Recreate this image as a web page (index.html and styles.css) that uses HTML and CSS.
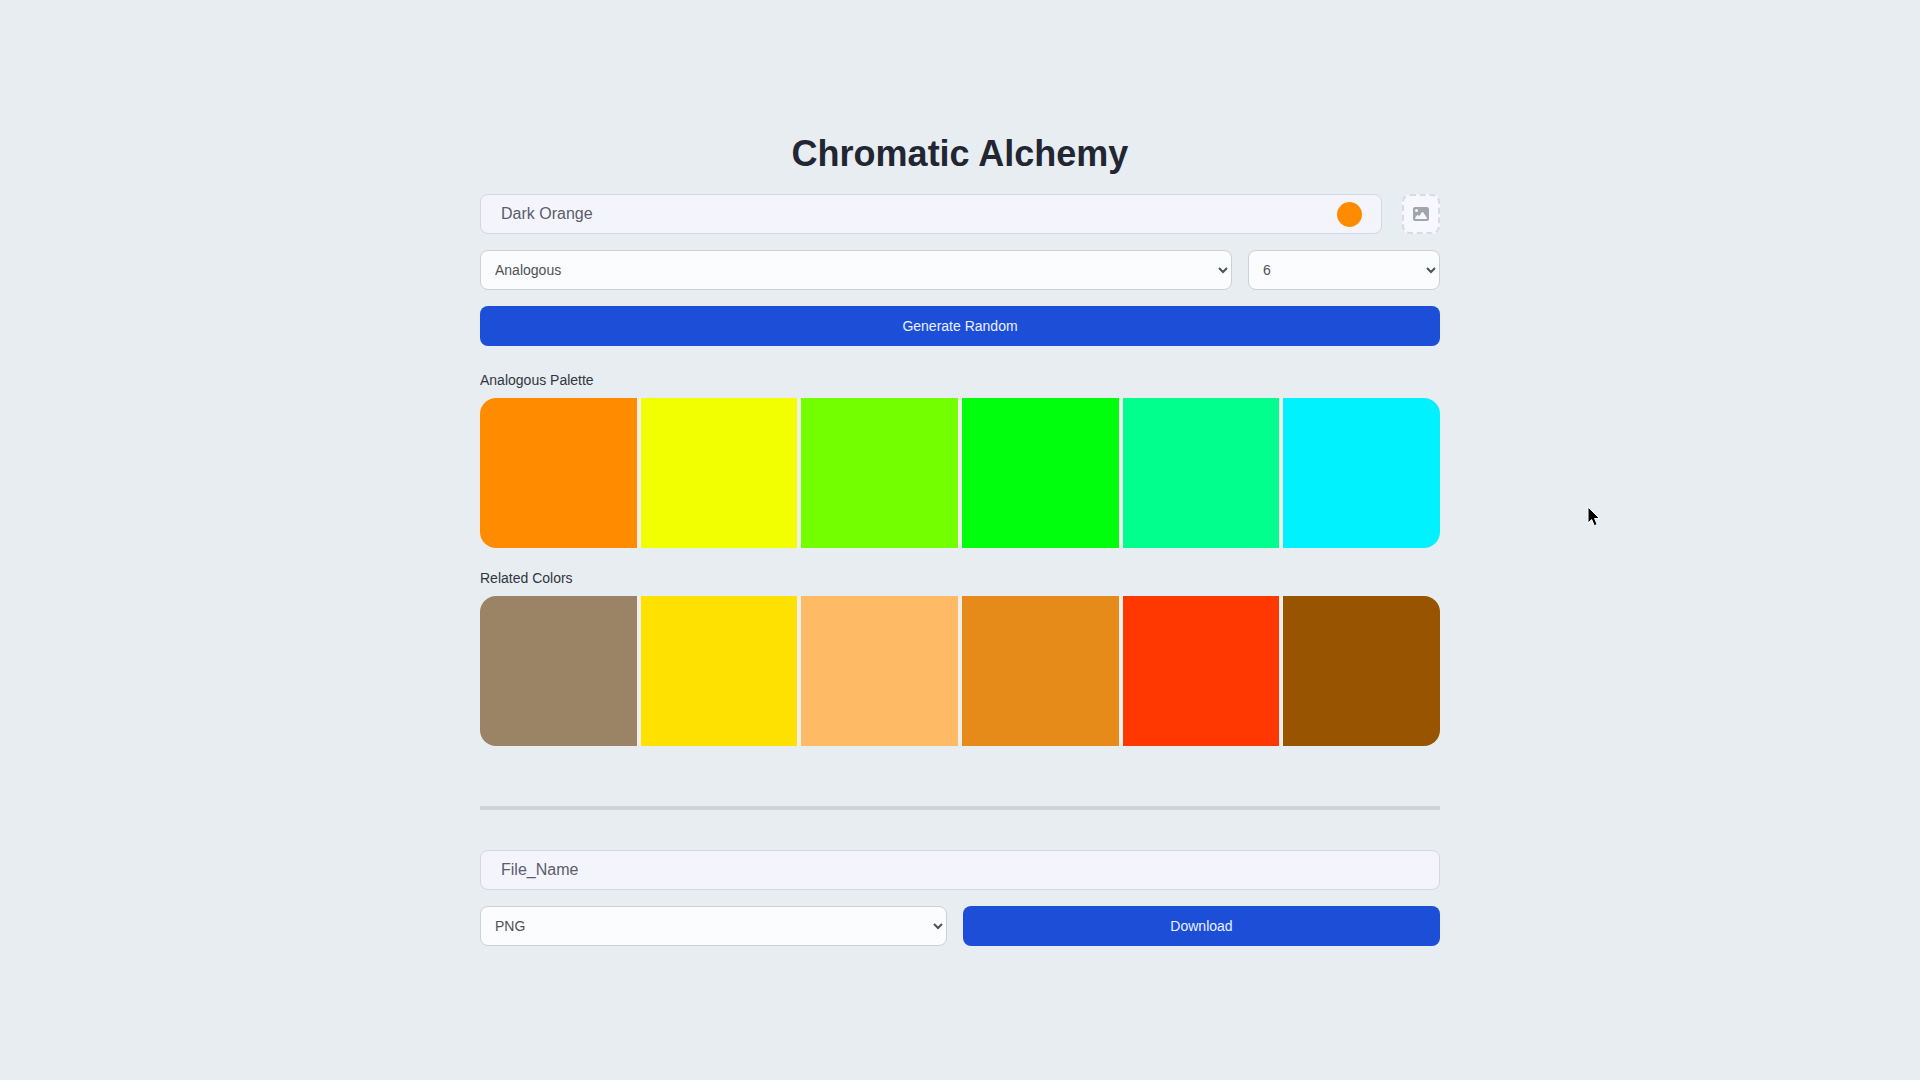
FILE: index.html
```html
<!DOCTYPE html>
<html lang="en">
<head>
<meta charset="utf-8">
<title>Chromatic Alchemy</title>
<link rel="stylesheet" href="styles.css">
</head>
<body>
<main class="app">
  <h1 class="title">Chromatic Alchemy</h1>
  <section class="controls">
    <div class="row row-color">
      <div class="field color-field">
        <input class="text-input" type="text" value="Dark Orange" aria-label="Color">
        <span class="color-dot"></span>
      </div>
      <button class="upload" aria-label="Upload image">
        <svg width="16" height="16" viewBox="0 0 512 512"><path fill="#a2a5a9" d="M0 96C0 60.7 28.7 32 64 32H448c35.3 0 64 28.7 64 64V416c0 35.3-28.7 64-64 64H64c-35.3 0-64-28.7-64-64V96zM323.8 202.5c-4.5-6.6-11.9-10.5-19.8-10.5s-15.4 3.9-19.8 10.5l-87 127.6L170.7 297c-4.6-5.7-11.5-9-18.7-9s-14.2 3.300-18.700 9l-64 80c-5.800 7.200-6.900 17.100-2.900 25.400s12.400 13.600 21.600 13.600h96 32H424c8.900 0 17.100-4.900 21.200-12.800s3.600-17.400-1.400-24.700l-120-176zM112 192a48 48 0 1 0 0-96 48 48 0 1 0 0 96z"/></svg>
      </button>
    </div>
    <div class="row">
      <select class="select scheme" aria-label="Scheme"><option>Analogous</option></select>
      <select class="select count" aria-label="Count"><option>6</option></select>
    </div>
    <button class="button">Generate Random</button>
  </section>

  <section class="palette-block">
    <h2 class="label">Analogous Palette</h2>
    <div class="palette">
      <div class="swatch orange"></div>
      <div class="swatch yellow"></div>
      <div class="swatch lime"></div>
      <div class="swatch green"></div>
      <div class="swatch spring"></div>
      <div class="swatch cyan"></div>
    </div>
  </section>
  <section class="palette-block related">
    <h2 class="label">Related Colors</h2>
    <div class="palette">
      <div class="swatch taupe"></div>
      <div class="swatch gold"></div>
      <div class="swatch peach"></div>
      <div class="swatch ochre"></div>
      <div class="swatch red"></div>
      <div class="swatch brown"></div>
    </div>
  </section>

  <hr class="divider">

  <section class="controls">
    <div class="field"><input class="text-input" type="text" placeholder="File_Name" aria-label="File name"></div>
    <div class="row">
      <select class="select format" aria-label="Format"><option>PNG</option></select>
      <button class="button download">Download</button>
    </div>
  </section>
</main>
<svg class="cursor" width="14" height="22" viewBox="0 0 14 22"><path d="M1 1v16l3.700-3.400 2.600 6.100 2.900-1.200-2.600-6H12.500z" fill="#000" stroke="#fff" stroke-width="1"/></svg>
</body>
</html>
```
FILE: styles.css
```css
* { box-sizing: border-box; }

body {
  margin: 0;
  height: 100vh;
  display: flex;
  align-items: center;
  justify-content: center;
  background: #e8edf1;
  font-family: "Liberation Sans", Arial, sans-serif;
  overflow: hidden;
}

.app { width: 960px; }

.title {
  margin: 0 0 20px;
  font-size: 36px;
  line-height: 40px;
  font-weight: 700;
  text-align: center;
  color: #222632;
}

.controls { display: flex; flex-direction: column; gap: 16px; }
.row { display: flex; gap: 16px; }
.row-color { gap: 20px; }

.field {
  display: flex;
  align-items: center;
  height: 40px;
  padding: 0 19px;
  border: 1px solid #d3d8e0;
  border-radius: 8px;
  background: #f4f5fc;
}
.color-field { flex: 1; }

.text-input {
  flex: 1;
  min-width: 0;
  height: 38px;
  padding: 0 1px;
  border: 0;
  outline: 0;
  background: none;
  font: 16px "Liberation Sans", Arial, sans-serif;
  color: #5b5c69;
}
.text-input::placeholder { color: #5b5c69; }

.color-dot {
  width: 25px;
  height: 25px;
  border-radius: 50%;
  background: #ff8c00;
}

.upload {
  display: flex;
  align-items: center;
  justify-content: center;
  width: 38px;
  height: 40px;
  padding: 0;
  border: 2px dashed #d9dbe3;
  border-radius: 8px;
  background: #f7f8fe;
}

.select {
  height: 40px;
  padding: 0 0 0 10px;
  border: 1px solid #cbd2d7;
  border-radius: 8px;
  background: #fafcfd;
  font: 14px "Liberation Sans", Arial, sans-serif;
  color: #4e5257;
}
.scheme { flex: 1; }
.count { width: 192px; }
.format { width: 467px; }

.button {
  height: 40px;
  border: 0;
  border-radius: 8px;
  background: #1d4ed8;
  font: 14px "Liberation Sans", Arial, sans-serif;
  color: #e9f1ff;
}
.download { flex: 1; }

.palette-block { margin-top: 24px; }
.related { margin-top: 20px; }

.label {
  margin: 0 0 8px;
  font-size: 14px;
  line-height: 20px;
  font-weight: 400;
  color: #30363d;
}

.palette {
  display: grid;
  grid-template-columns: repeat(6, 1fr);
  gap: 4px;
  height: 150px;
  border-radius: 16px;
  overflow: hidden;
  background: #eff0ed;
}

.orange { background: #ff8c00; }
.yellow { background: #f2ff00; }
.lime { background: #73ff00; }
.green { background: #00ff0d; }
.spring { background: #00ff8c; }
.cyan { background: #00f2ff; }
.taupe { background: #9b8366; }
.gold { background: #ffe100; }
.peach { background: #ffba66; }
.ochre { background: #e68a19; }
.red { background: #ff3700; }
.brown { background: #995400; }

.divider {
  height: 4px;
  margin: 60px 0 40px;
  border: 0;
  background: #ced3d7;
}

.cursor { position: absolute; left: 1587px; top: 506px; }
```
